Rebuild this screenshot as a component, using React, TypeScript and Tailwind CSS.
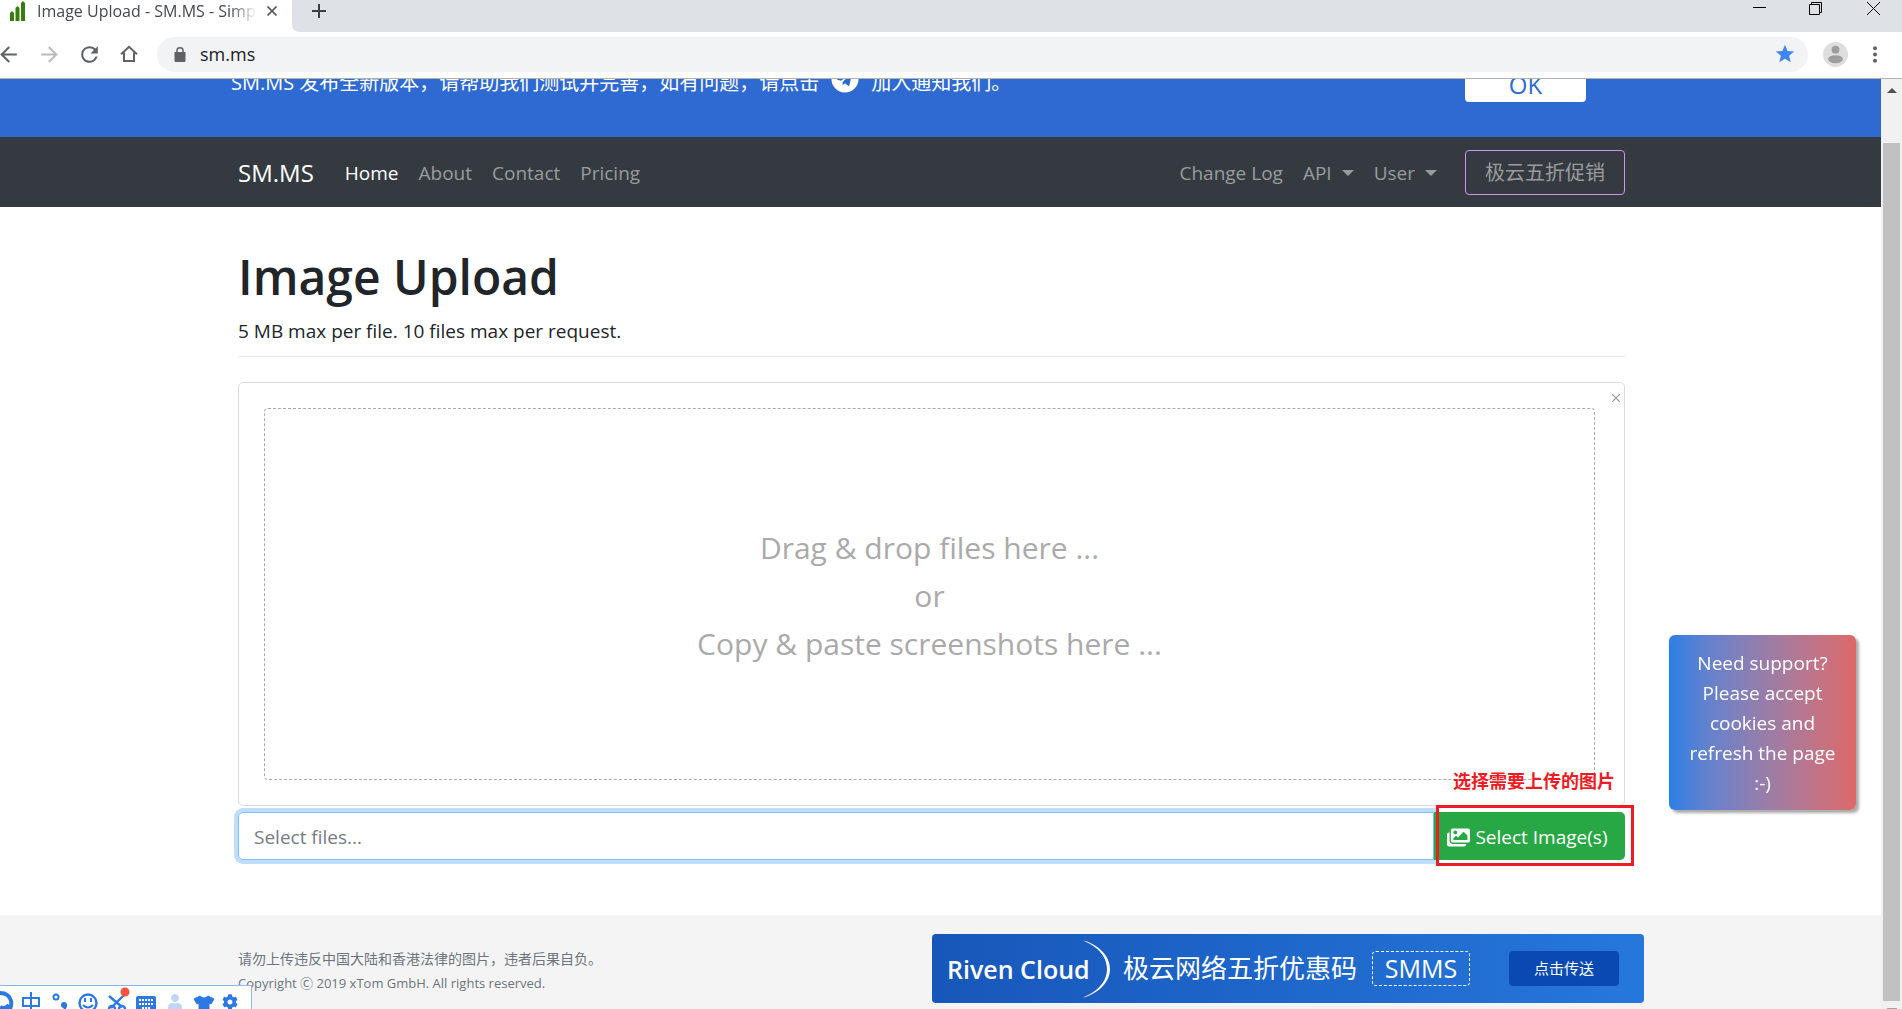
import React from "react";
import { FaCog, FaImages, FaTelegram, FaTshirt, FaUser } from "react-icons/fa";
import { MdArrowBack, MdArrowForward, MdRefresh, MdStar } from "react-icons/md";

const leftLinks = ["About", "Contact", "Pricing"];

function Caret() {
  return <span className="border-x-[6px] border-t-[6px] border-x-transparent border-t-current" />;
}

function TabStrip() {
  return (
    <div className="flex h-8 items-start bg-[#dee1e6]">
      <div className="relative flex h-8 w-[292px] items-start bg-white pl-[10px]">
        <svg viewBox="0 0 16 20" className="mt-[1px] h-5 w-4 shrink-0" fill="#387c0f">
          <path d="M0 20V12L2 10 4 12V20ZM5.5 20V7L7.5 5 9.5 7V20ZM11 20V2L13 0 15 2V20Z" />
        </svg>
        <div className="ml-[11px] w-[220px] overflow-hidden text-[16px] leading-[22px] whitespace-nowrap text-[#45494d] [mask-image:linear-gradient(to_right,black_88%,transparent)]">
          Image Upload - SM.MS - Simple
        </div>
        <button aria-label="Close tab" className="ml-[10px] mt-[6px]">
          <svg viewBox="0 0 10 10" className="size-[10px]" stroke="#5a5e63" strokeWidth="1.7">
            <path d="M0.5 0.5 9.5 9.5M9.5 0.5 0.5 9.5" />
          </svg>
        </button>
        <svg viewBox="0 0 8 8" className="absolute bottom-0 left-full size-2" fill="#fff">
          <path d="M0 0Q0 8 8 8H0Z" />
        </svg>
      </div>
      <button aria-label="New tab" className="ml-5 mt-1">
        <svg viewBox="0 0 14 14" className="size-[14px]" stroke="#3c4043" strokeWidth="2">
          <path d="M7 0V14M0 7H14" />
        </svg>
      </button>
      <div className="ml-auto flex items-start pt-[2px] pr-[22px]">
        <button aria-label="Minimize" className="mr-[43px]">
          <svg viewBox="0 0 13 13" className="size-[13px]" stroke="#000">
            <path d="M0 5.5H13" />
          </svg>
        </button>
        <button aria-label="Restore" className="mr-[45px]">
          <svg viewBox="0 0 13 13" className="size-[13px]" stroke="#000" fill="none">
            <path d="M0.5 2.5H10.5V12.5H0.5ZM2.5 2.5V0.5H12.5V10.5H10.5" />
          </svg>
        </button>
        <button aria-label="Close">
          <svg viewBox="0 0 13 13" className="size-[13px]" stroke="#000">
            <path d="M0 0 13 13M13 0 0 13" />
          </svg>
        </button>
      </div>
    </div>
  );
}

function Toolbar() {
  return (
    <div className="flex h-[47px] items-center border-b border-[#b1b1b1] bg-white pb-[2px] text-[#5f6368]">
      <button aria-label="Back" className="-ml-1">
        <MdArrowBack className="size-[25px]" />
      </button>
      <button aria-label="Forward" className="ml-4 text-[#babcbe]">
        <MdArrowForward className="size-[25px]" />
      </button>
      <button aria-label="Reload" className="ml-[15px]">
        <MdRefresh className="size-[25px]" />
      </button>
      <button aria-label="Home" className="ml-[18px]">
        <svg viewBox="0 0 18 18" className="size-[18px]" fill="none" stroke="currentColor" strokeWidth="2">
          <path d="M1 9.3 9 1.8 17 9.3M4 7.5V16H14V7.5" />
        </svg>
      </button>
      <div className="ml-[19px] flex h-[35px] flex-1 items-center rounded-full bg-[#f1f3f4] pl-[17px] pr-3">
        <svg viewBox="0 0 12 15" className="h-[15px] w-3" fill="currentColor">
          <path d="M0.5 5H11.5V14Q11.5 15 10.5 15H1.5Q0.5 15 0.5 14Z" />
          <path d="M3 6V3.4Q3 0.8 6 0.8T9 3.4V6" fill="none" stroke="currentColor" strokeWidth="1.5" />
        </svg>
        <input
          aria-label="Address"
          defaultValue="sm.ms"
          className="ml-[14px] min-w-0 flex-1 bg-transparent text-[18px] leading-6 text-[#202124] outline-none"
        />
        <button aria-label="Bookmark" className="text-[#4285f4]">
          <MdStar className="size-[22px]" />
        </button>
      </div>
      <button aria-label="Profile" className="ml-[15px]">
        <svg viewBox="0 0 25 25" className="size-[25px]">
          <circle cx="12.5" cy="12.5" r="12.5" fill="#dedede" />
          <circle cx="12.5" cy="7.7" r="3.9" fill="#9d9d9d" />
          <ellipse cx="12.5" cy="17.2" rx="7.3" ry="4" fill="#9d9d9d" />
        </svg>
      </button>
      <button aria-label="Menu" className="mr-[25px] ml-[25px]">
        <svg viewBox="0 0 4 17" className="h-[17px] w-1" fill="currentColor">
          <circle cx="2" cy="2.2" r="2" />
          <circle cx="2" cy="8.5" r="2" />
          <circle cx="2" cy="14.8" r="2" />
        </svg>
      </button>
    </div>
  );
}

function Notice() {
  return (
    <div className="flex h-[58px] justify-center overflow-hidden bg-[#2f6ad2] pr-[18px] text-white">
      <div className="-mt-3 flex w-full max-w-[1401px] items-start">
        <p className="flex h-8 items-center text-[20px] leading-8">
          <span>SM.MS 发布全新版本，请帮助我们测试并完善，如有问题，请点击</span>
          <a href="#telegram" aria-label="Telegram" className="-mt-2 mr-3 ml-3">
            <FaTelegram className="size-[28px]" />
          </a>
          <span>加入通知我们。</span>
        </p>
        <button className="mr-[46px] ml-auto h-[35px] w-[121px] rounded bg-white text-[24px] leading-9 text-[#2f6ad2]">
          OK
        </button>
      </div>
    </div>
  );
}

function Navbar() {
  return (
    <nav className="flex h-[70px] justify-center bg-[#343a40] pr-[18px] text-[19px] text-[#999c9f]">
      <div className="flex w-full max-w-[1387px] items-center">
        <a href="#" className="mr-[31px] pt-[2px] text-[24px] text-white">
          SM.MS
        </a>
        <div className="flex gap-5 pt-[2px]">
          <a href="#home" className="text-white">
            Home
          </a>
          {leftLinks.map((link) => (
            <a key={link} href={`#${link.toLowerCase()}`}>
              {link}
            </a>
          ))}
        </div>
        <div className="ml-auto flex items-center gap-5">
          <a href="#changelog" className="pt-[2px]">
            Change Log
          </a>
          <button className="flex items-center gap-[10px] pt-[2px]">
            API <Caret />
          </button>
          <button className="flex items-center gap-[10px] pt-[2px]">
            User <Caret />
          </button>
          <a
            href="#promo"
            className="ml-2 flex h-[45px] w-[160px] items-center justify-center rounded border border-[#cd93f7] pt-[2px] text-[20px]"
          >
            极云五折促销
          </a>
        </div>
      </div>
    </nav>
  );
}

function Uploader() {
  return (
    <main className="flex flex-1 justify-center pr-[18px]">
      <div className="w-full max-w-[1387px] pt-10 text-[#212529]">
        <h1 className="mb-[9px] text-[48px] leading-[60px] font-semibold">Image Upload</h1>
        <p className="text-[19px] leading-[30px]">5 MB max per file. 10 files max per request.</p>
        <hr className="mt-[10px] mb-[25px] border-[#e8e8e9]" />

        <div className="relative mb-[6px] h-[424px] rounded-[5px] border border-[#dddddd] p-[25px] pr-[29px]">
          <button aria-label="Close" className="absolute top-[11px] right-1 text-[#999]">
            <svg viewBox="0 0 8 8" className="size-2" stroke="currentColor" strokeWidth="1.2">
              <path d="M0 0 8 8M8 0 0 8" />
            </svg>
          </button>
          <div className="flex h-full flex-col items-center justify-center rounded border border-dashed border-[#aaaaaa] pt-1 text-[30px] leading-[48px] text-[#aaaaaa]">
            <span>Drag &amp; drop files here ...</span>
            <span>or</span>
            <span>Copy &amp; paste screenshots here ...</span>
          </div>
        </div>

        <div className="relative flex h-12">
          <input
            aria-label="Select files"
            placeholder="Select files..."
            className="min-w-0 flex-1 rounded-l-[5px] border border-[#80bdff] px-[15px] pt-[2px] text-[19px] shadow-[0_0_0_4px_#bfdeff] outline-none placeholder:text-[#777c82]"
          />
          <button className="relative flex w-[191px] items-center justify-center gap-[5px] rounded-r-[5px] bg-[#28a745] pt-[2px] pr-1 text-[19px] text-white">
            <FaImages className="size-[23px]" />
            Select Image(s)
          </button>
          {/* hand-drawn hint over the button */}
          <div className="pointer-events-none absolute -top-[7px] -right-[9px] h-[61px] w-[198px] border-[3px] border-[#ed1c24]" />
          <span className="pointer-events-none absolute right-[10px] bottom-[67px] text-[18px] leading-6 font-bold text-[#ed1c24]">
            选择需要上传的图片
          </span>
        </div>
      </div>
    </main>
  );
}

function Footer() {
  return (
    <footer className="flex h-[94px] justify-center bg-[#f4f4f4] pr-[18px]">
      <div className="flex w-full max-w-[1387px] items-start">
        <div className="pt-[31px] leading-[25px] text-[#6c757d]">
          <p className="text-[14px]">请勿上传违反中国大陆和香港法律的图片，违者后果自负。</p>
          <p className="text-[13px]">Copyright Ⓒ 2019 xTom GmbH. All rights reserved.</p>
        </div>
        <a
          href="#riven"
          className="mt-[19px] -mr-[19px] ml-auto flex h-[69px] w-[712px] items-center rounded bg-linear-to-r from-[#1857ba] to-[#2677dc] pl-[15px] text-white"
        >
          <span className="w-[136px] pt-[2px] text-[25px] font-semibold whitespace-nowrap">Riven Cloud</span>
          <svg viewBox="0 0 28 58" className="h-[58px] w-7" fill="#fff">
            <path d="M0 0.5C12 3 27 14 27 29S12 55 0 57.5C11 53 24 44 24 29S11 5 0 0.5Z" />
          </svg>
          <span className="ml-3 text-[26px] whitespace-nowrap">极云网络五折优惠码</span>
          <span className="ml-[15px] flex h-[35px] w-[98px] items-center justify-center rounded border border-dashed border-white text-[25px]">
            SMMS
          </span>
          <span className="mr-[25px] ml-auto flex h-[35px] w-[110px] items-center justify-center rounded bg-[#094ab2] text-[15px]">
            点击传送
          </span>
        </a>
      </div>
    </footer>
  );
}

function Scrollbar() {
  return (
    <div className="flex w-[21px] shrink-0 flex-col items-center bg-[#f1f1f1]">
      <svg viewBox="0 0 10 5" className="mt-[9px] h-[5px] w-[10px]" fill="#505050">
        <path d="M5 0 10 5H0Z" />
      </svg>
      <div className="mt-[50px] w-[17px] flex-1 bg-[#c1c1c1]" />
      <svg viewBox="0 0 10 1" className="mt-[7px] h-px w-[10px]" fill="#a3a3a3">
        <path d="M0 0H10V1H0Z" />
      </svg>
    </div>
  );
}

function InputMethodBar() {
  return (
    <div className="fixed bottom-0 left-0 flex h-6 w-[252px] overflow-hidden border-t border-r border-[#8fb5ef] bg-white text-[#2c79e3]">
      <svg viewBox="0 0 252 24" className="h-6 w-[252px] shrink-0" fill="none" stroke="currentColor" strokeWidth="2.4">
        <path d="M0 7Q9 7 11 15Q12 20 9 25M0 21Q5 24 9 19" strokeWidth="4" />
        <path d="M23 12H39V20H23ZM31 6V28" strokeWidth="2" />
        <circle cx="56" cy="11" r="2.5" strokeWidth="2" />
        <circle cx="64" cy="19" r="3" fill="currentColor" stroke="none" />
        <path d="M66 19Q66 23 62 25" strokeWidth="2" />
        <circle cx="88" cy="17" r="8.5" />
        <path d="M85 12V16M91 12V16M83 19Q88 24 93 19" strokeWidth="2" />
        <path d="M109 10 122 21M124 9 111 22" />
        <circle cx="112" cy="23" r="3" />
        <circle cx="122" cy="23" r="3" />
        <circle cx="125" cy="6" r="4.5" fill="#f5533d" stroke="none" />
        <rect x="136" y="10" width="20" height="18" rx="2" fill="currentColor" stroke="none" />
        <path d="M139 14H153M139 18H153M142 22H150" stroke="#fff" strokeWidth="2" strokeDasharray="2 1" />
        <FaUser x={167} y={8} width={16} height={18} color="#bfd6f8" stroke="none" />
        {/* shirt */}
        <path
          d="M200 10Q204 14 208 10L214 13 211 18 209 17V28H199V17L197 18 194 13Z"
          fill="currentColor"
          strokeWidth="1"
        />
        <FaCog x={222} y={8} width={20} height={20} />
      </svg>
    </div>
  );
}

export default function App() {
  return (
    <div className="flex h-screen flex-col overflow-hidden bg-white font-['Open_Sans','Noto_Sans_CJK_SC',sans-serif]">
      <TabStrip />
      <Toolbar />
      <div className="flex min-h-0 flex-1">
        <div className="flex min-w-0 flex-1 flex-col">
          <Notice />
          <Navbar />
          <Uploader />
          <Footer />
        </div>
        <Scrollbar />
      </div>
      <aside className="fixed right-[46px] bottom-[199px] w-[187px] rounded-md bg-linear-to-r from-[#2780e5] to-[#dd6868] px-3 pt-[13px] pb-3 text-center text-[19px] leading-[30px] text-white shadow-[3px_3px_3px_#aaaaaa]">
        Need support? Please accept cookies and refresh the page :-)
      </aside>
      <InputMethodBar />
    </div>
  );
}
